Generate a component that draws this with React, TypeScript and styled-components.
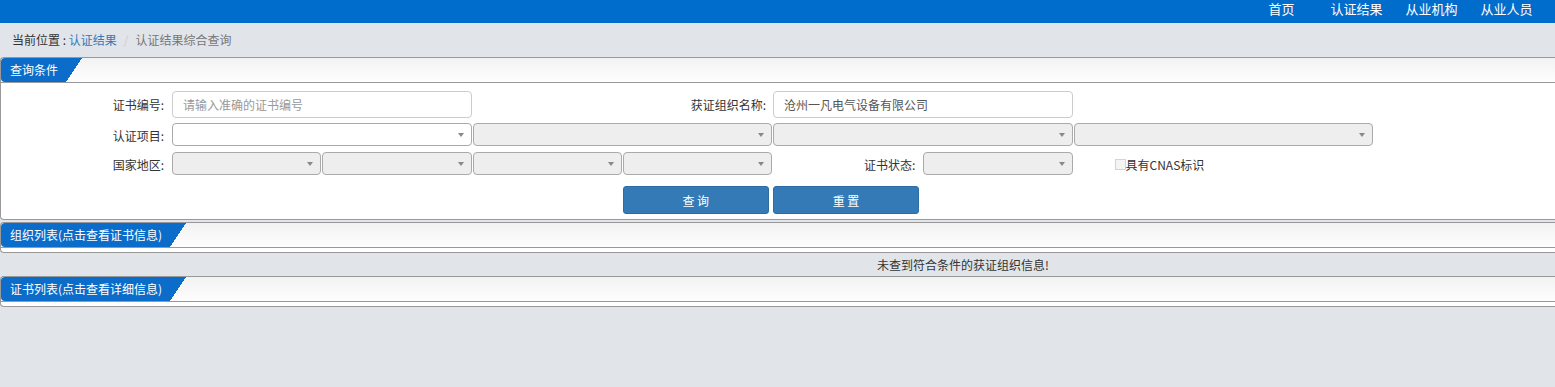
import * as React from 'react';
import styled, { createGlobalStyle } from 'styled-components';

const GlobalStyle = createGlobalStyle`
  html, body {
    margin: 0;
    padding: 0;
    background: #e1e5ea;
    overflow: hidden;
  }
  body {
    font-family: "Noto Sans CJK SC", "Noto Sans", sans-serif;
    font-size: 12px;
    color: #333;
  }
  * { box-sizing: border-box; }
`;

const TopBar = styled.div`
  height: 23px;
  background: #006dcc;
  display: flex;
  justify-content: flex-end;
  padding-right: 11px;
`;

const NavItem = styled.a`
  width: 75px;
  text-align: center;
  color: #fff;
  font-size: 13px;
  line-height: 17px;
  text-decoration: none;
`;

const Breadcrumb = styled.div`
  height: 34px;
  display: flex;
  align-items: center;
  padding: 0 0 2px 12px;
  color: #333;
`;

const Crumb = styled.span<{ $tone?: 'link' | 'muted' }>`
  color: ${p => (p.$tone === 'link' ? '#337ab7' : p.$tone === 'muted' ? '#777' : '#333')};
`;

const Sep = styled.span`
  color: #ccc;
  padding: 0 7px;
`;

const Panel = styled.section`
  background: #fff;
  border: 1px solid #999;
  border-right: none;
  border-radius: 4px 0 0 4px;
`;

const PanelHead = styled.div`
  height: 25px;
  display: flex;
  background: linear-gradient(to bottom, #f2f2f2, #fefefe);
  border-bottom: 1px solid #999;
  border-radius: 4px 0 0 0;
`;

const TabText = styled.span`
  background: #0b6cc9;
  color: #fff;
  line-height: 24px;
  padding: 0 8px 0 9px;
  border-radius: 4px 0 0 4px;
  white-space: nowrap;
`;

const Slant = styled.span`
  width: 16px;
  background: linear-gradient(to bottom right, #0b6cc9 50%, transparent 50%);
`;

const FormGrid = styled.div`
  display: grid;
  grid-template-columns: 171px repeat(8, 150.25px);
  grid-template-rows: 27px 24px 24px 33px;
  row-gap: 5px;
  padding: 8px 0 5px;
`;

const Label = styled.label<{ $col: string; $pad?: number }>`
  grid-column: ${p => p.$col};
  align-self: center;
  text-align: right;
  padding-right: ${p => p.$pad ?? 8}px;
  color: #333;
  white-space: nowrap;
`;

const TextInput = styled.input<{ $col: string }>`
  grid-column: ${p => p.$col};
  width: calc(100% - 1px);
  height: 27px;
  border: 1px solid #ccc;
  border-radius: 4px;
  padding: 0 10px;
  font: inherit;
  color: #555;
  outline: none;
  &::placeholder { color: #999; }
`;

const SelectBox = styled.div<{ $col: string; $light?: boolean }>`
  grid-column: ${p => p.$col};
  width: calc(100% - 1px);
  height: 23px;
  border: 1px solid #aaa;
  border-radius: 4px;
  background: ${p => (p.$light ? '#fff' : '#eee')};
  display: flex;
  align-items: center;
  justify-content: flex-end;
  padding-right: 7px;
`;

const Arrow = styled.span`
  width: 0;
  height: 0;
  border-left: 3px solid transparent;
  border-right: 3px solid transparent;
  border-top: 4px solid #888;
`;

const CheckField = styled.label`
  grid-column: 8 / span 2;
  align-self: center;
  display: flex;
  align-items: center;
  padding-left: 41px;
  color: #333;
`;

const Check = styled.input`
  appearance: none;
  width: 11px;
  height: 11px;
  margin: 0;
  border: 1px solid #d4d4d4;
  background: #f4f4f4;
`;

const Button = styled.button<{ $col: number }>`
  grid-column: ${p => p.$col};
  align-self: end;
  width: 146px;
  height: 28px;
  background: #337ab7;
  border: 1px solid #2e6da4;
  border-radius: 3px;
  color: #fff;
  font: inherit;
  font-size: 12px;
  cursor: pointer;
`;

const EmptyBody = styled.div`
  height: 4px;
`;

const Stack = styled.div`
  display: flex;
  flex-direction: column;
  gap: 2px;
`;

const Message = styled.div`
  height: 23px;
  line-height: 23px;
  padding-left: 877px;
  color: #333;
  white-space: nowrap;
`;

function Select({ col, light }: { col: string; light?: boolean }) {
  return (
    <SelectBox $col={col} $light={light}>
      <Arrow />
    </SelectBox>
  );
}

function Head({ title }: { title: string }) {
  return (
    <PanelHead>
      <TabText>{title}</TabText>
      <Slant />
    </PanelHead>
  );
}

export default function App() {
  return (
    <>
      <GlobalStyle />
      <TopBar>
        <NavItem>首页</NavItem>
        <NavItem>认证结果</NavItem>
        <NavItem>从业机构</NavItem>
        <NavItem>从业人员</NavItem>
      </TopBar>
      <Breadcrumb>
        <Crumb>当前位置 : </Crumb>
        <Crumb $tone="link">&nbsp;认证结果</Crumb>
        <Sep>/</Sep>
        <Crumb $tone="muted">认证结果综合查询</Crumb>
      </Breadcrumb>

      <Stack>
        <Panel>
          <Head title="查询条件" />
          <FormGrid>
            <Label $col="1">证书编号:</Label>
            <TextInput $col="2 / span 2" placeholder="请输入准确的证书编号" />
            <Label $col="4 / span 2" $pad={7}>获证组织名称:</Label>
            <TextInput $col="6 / span 2" defaultValue="沧州一凡电气设备有限公司" />

            <Label $col="1">认证项目:</Label>
            <Select col="2 / span 2" light />
            <Select col="4 / span 2" />
            <Select col="6 / span 2" />
            <Select col="8 / span 2" />

            <Label $col="1">国家地区:</Label>
            <Select col="2" />
            <Select col="3" />
            <Select col="4" />
            <Select col="5" />
            <Label $col="6">证书状态:</Label>
            <Select col="7" />
            <CheckField>
              <Check type="checkbox" />
              具有CNAS标识
            </CheckField>

            <Button $col={5}>查 询</Button>
            <Button $col={6}>重 置</Button>
          </FormGrid>
        </Panel>

        <Panel>
          <Head title="组织列表(点击查看证书信息)" />
          <EmptyBody />
        </Panel>
      </Stack>

      <Message>未查到符合条件的获证组织信息!</Message>

      <Panel>
        <Head title="证书列表(点击查看详细信息)" />
        <EmptyBody />
      </Panel>
    </>
  );
}
